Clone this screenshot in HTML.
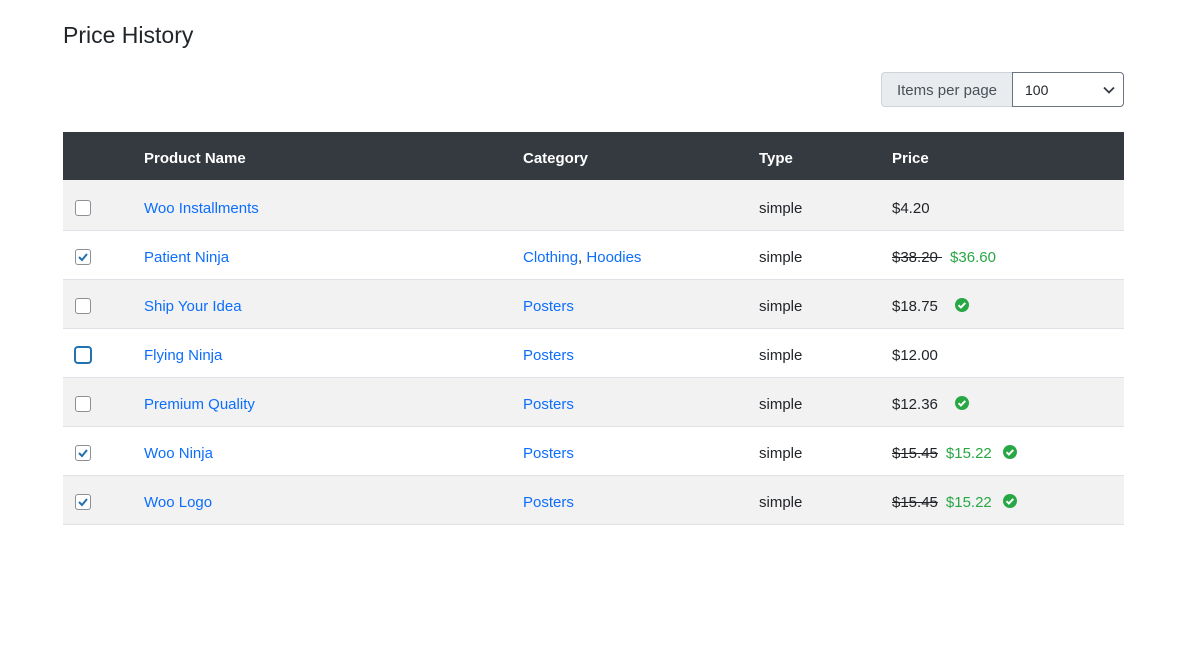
<!DOCTYPE html>
<html><head><meta charset="utf-8"><style>
body{margin:0;background:#fff;font-family:"Liberation Sans",sans-serif;color:#212529;font-size:15px;}
h1{position:absolute;left:63px;top:19px;margin:0;font-size:23px;font-weight:400;line-height:32px;}
.ipp{position:absolute;left:881px;top:72px;height:35px;display:flex;}
.ipp .l{background:#e9ecef;border:1px solid #ced4da;border-right:none;border-radius:4px 0 0 4px;width:131px;box-sizing:border-box;line-height:35px;text-align:center;color:#495057;}
.ipp .s{border:1px solid #6c757d;border-radius:0 4px 4px 0;width:112px;box-sizing:border-box;line-height:35px;padding-left:12px;font-size:14px;position:relative;}
.ipp .s svg{position:absolute;right:8px;top:13px;}
table{position:absolute;left:63px;top:132px;width:1061px;border-collapse:collapse;}
th{background:#343a40;color:#fff;text-align:left;height:44px;padding:4px 0 0 0;font-weight:700;}
td{height:43px;padding:5px 0 0 0;border-bottom:1px solid #dee2e6;}
tr.first td{height:44px;padding-top:6px;}
tr.g td{background:#f2f2f2;}
a{color:#0d6efd;text-decoration:none;}
.cb{display:inline-block;width:14px;height:14px;border:1px solid #8c8f94;border-radius:3px;margin-left:12px;vertical-align:middle;position:relative;background:#fff;top:-1px;}
.cb.f{border:2px solid #2271b1;width:14px;height:14px;border-radius:4px;margin-left:11px;}
.cb svg{position:absolute;left:1px;top:1px;}
del{color:#212529;}
.n{color:#28a745;margin-left:8px;}
.ok{display:inline-block;vertical-align:middle;margin-left:16px;position:relative;top:-2px;}
</style></head><body>
<h1>Price History</h1>
<div class="ipp"><div class="l">Items per page</div><div class="s">100<svg width="12" height="8" viewBox="0 0 12 8"><path d="M1 1.5l5 5 5-5" stroke="#343a40" stroke-width="1.8" fill="none"/></svg></div></div>
<table>
<tr><th style="width:81px"></th><th style="width:379px">Product Name</th><th style="width:236px">Category</th><th style="width:133px">Type</th><th>Price</th></tr>
<tr class="g first"><td><span class="cb"></span></td><td><a>Woo Installments</a></td><td></td><td>simple</td><td>$4.20</td></tr>
<tr><td><span class="cb"><svg width="12" height="12" viewBox="0 0 12 12"><path d="M2 6l3 3 5-6" stroke="#2271b1" stroke-width="2" fill="none"/></svg></span></td><td><a>Patient Ninja</a></td><td><a>Clothing</a>, <a>Hoodies</a></td><td>simple</td><td><del>$38.20 </del><span class="n">$36.60</span></td></tr>
<tr class="g"><td><span class="cb"></span></td><td><a>Ship Your Idea</a></td><td><a>Posters</a></td><td>simple</td><td>$18.75<svg class="ok" width="16" height="16" viewBox="0 0 16 16"><circle cx="8" cy="8" r="7" fill="#28a745"/><path d="M4.5 8.2l2.4 2.3 4.4-4.6" stroke="#fff" stroke-width="2" fill="none"/></svg></td></tr>
<tr><td><span class="cb f"></span></td><td><a>Flying Ninja</a></td><td><a>Posters</a></td><td>simple</td><td>$12.00</td></tr>
<tr class="g"><td><span class="cb"></span></td><td><a>Premium Quality</a></td><td><a>Posters</a></td><td>simple</td><td>$12.36<svg class="ok" width="16" height="16" viewBox="0 0 16 16"><circle cx="8" cy="8" r="7" fill="#28a745"/><path d="M4.5 8.2l2.4 2.3 4.4-4.6" stroke="#fff" stroke-width="2" fill="none"/></svg></td></tr>
<tr><td><span class="cb"><svg width="12" height="12" viewBox="0 0 12 12"><path d="M2 6l3 3 5-6" stroke="#2271b1" stroke-width="2" fill="none"/></svg></span></td><td><a>Woo Ninja</a></td><td><a>Posters</a></td><td>simple</td><td><del>$15.45</del><span class="n">$15.22</span><svg class="ok" style="margin-left:10px" width="16" height="16" viewBox="0 0 16 16"><circle cx="8" cy="8" r="7" fill="#28a745"/><path d="M4.5 8.2l2.4 2.3 4.4-4.6" stroke="#fff" stroke-width="2" fill="none"/></svg></td></tr>
<tr class="g"><td><span class="cb"><svg width="12" height="12" viewBox="0 0 12 12"><path d="M2 6l3 3 5-6" stroke="#2271b1" stroke-width="2" fill="none"/></svg></span></td><td><a>Woo Logo</a></td><td><a>Posters</a></td><td>simple</td><td><del>$15.45</del><span class="n">$15.22</span><svg class="ok" style="margin-left:10px" width="16" height="16" viewBox="0 0 16 16"><circle cx="8" cy="8" r="7" fill="#28a745"/><path d="M4.5 8.2l2.4 2.3 4.4-4.6" stroke="#fff" stroke-width="2" fill="none"/></svg></td></tr>
</table>
</body></html>
